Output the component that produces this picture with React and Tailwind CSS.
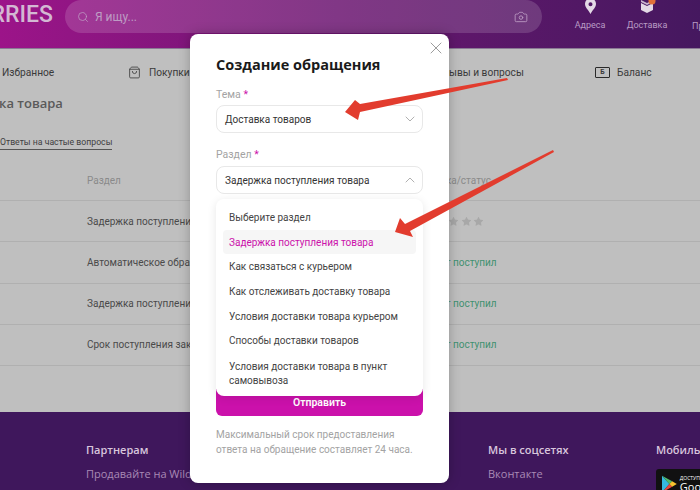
import React from 'react';
import { Search, Camera, ShoppingBag, X, ChevronDown, ChevronUp, Star } from 'lucide-react';

const rows = [
    ['Задержка поступления товара', null],
    ['Автоматическое обращение', 'Ответ поступил'],
    ['Задержка поступления товара', 'Ответ поступил'],
    ['Срок поступления заказа', 'Ответ поступил'],
];

const options = [
    'Выберите раздел',
    'Задержка поступления товара',
    'Как связаться с курьером',
    'Как отслеживать доставку товара',
    'Условия доставки товара курьером',
    'Способы доставки товаров',
];

const Label = ({ children }) => (
    <div className="text-[10.5px] leading-[16px] text-[#a3a3a3]">
        {children} <span className="text-[#cb11ab]">*</span>
    </div>
);

const Header = () => (
    <header className="h-[49px] shrink-0 flex bg-gradient-to-r from-[#9c1489] via-[#6a1570] to-[#45185f] border-b border-[#8a7a94]">
        <div className="w-[65px] shrink-0 overflow-hidden flex justify-end text-[#d3b8d3] text-[23px] leading-[30px] font-medium">
            <span className="whitespace-nowrap mr-[12px]">RRIES</span>
        </div>
        <div className="w-[477px] h-[33px] shrink-0 rounded-[17px] bg-white/15 flex items-center pl-[12px] pr-[14px] text-[#bd9cc3]">
            <Search size={12} strokeWidth={1.5} />
            <span className="ml-[6px] text-[12px] flex-1">Я ищу...</span>
            <Camera size={14} strokeWidth={1.5} />
        </div>
        <div className="flex-1 flex text-[9px] text-[#b99bc4]">
            <div className="ml-[30px] flex flex-col items-center w-[36px]">
                <svg width="11" height="14" viewBox="0 0 12 15">
                    <path fillRule="evenodd" d="M6 15 C3 10 0 8 0 4 A6 6 0 0 1 12 4 C12 8 9 10 6 15 Z M6 2.2 A2.2 2.2 0 1 0 6 6.6 A2.2 2.2 0 1 0 6 2.2 Z" fill="#e4d9e6" />
                </svg>
                <span className="mt-[5px]">Адреса</span>
            </div>
            <div className="ml-[19px] flex flex-col items-center w-[40px]">
                <svg width="20" height="14" viewBox="0 0 20 14">
                    <path d="M4 3 L10 6 L16 3 L16 10 L10 13 L4 10 Z" fill="#e4d9e6" />
                    <path d="M4 0 L10 3 L16 0 L16 2 L10 5 L4 2 Z" fill="#c9b4cf" />
                    <circle cx="15" cy="1" r="3.5" fill="#e0703a" />
                </svg>
                <span className="mt-[5px]">Доставка</span>
            </div>
            <span className="ml-[25px] mt-[20px] whitespace-nowrap">Про</span>
        </div>
    </header>
);

const NavBar = () => (
    <nav className="h-[45px] shrink-0 relative text-[10.2px] text-[#3a3a3a]">
        <span className="absolute left-[2px] top-[16px]">Избранное</span>
        <span className="absolute left-[128px] top-[16px] flex items-center gap-[8px]">
            <ShoppingBag size={13} strokeWidth={1.5} />Покупки
        </span>
        <span className="absolute left-[449px] top-[16px]">ывы и вопросы</span>
        <span className="absolute left-[595px] top-[16px] flex items-center gap-[7px]">
            <span className="w-[15px] h-[11px] border border-[#2a2a2a] rounded-[1px] flex items-center justify-center text-[7px] font-bold leading-none">Б</span>
            Баланс
        </span>
    </nav>
);

const Table = () => (
    <main className="flex-1 flex flex-col">
        <h2 className="text-[13px] leading-[18px] font-semibold text-[#5a5a5a] whitespace-nowrap -ml-[1px] font-['Open_Sans',sans-serif]">ка товара</h2>
        <div className="mt-[23px] h-[17px] text-[8.7px] leading-[14px] text-[#3f3f3f]">
            <span className="inline-block border-b border-[#555]">Ответы на частые вопросы</span>
        </div>
        <div className="mt-[8px] h-[41px] flex items-center border-b border-[#b0b0b0] text-[10px] text-[#8a8a8a]">
            <span className="ml-[87px] w-[335px] shrink-0">Раздел</span>
            <span className="whitespace-nowrap">Оценка/статус</span>
        </div>
        {rows.map((row, i) => (
            <div key={i} className="h-[41.25px] flex items-center border-b border-[#b0b0b0] text-[10px] text-[#4a4a4a] whitespace-nowrap">
                <span className="ml-[87px] w-[336px] shrink-0">{row[0]}</span>
                {row[1] ? (
                    <span className="text-[#3f9170]">{row[1]}</span>
                ) : (
                    <span className="flex gap-[1.5px] ml-[25px] text-[#a8a8a8]">
                        <Star size={11} fill="#a8a8a8" strokeWidth={0} />
                        <Star size={11} fill="#a8a8a8" strokeWidth={0} />
                        <Star size={11} fill="#a8a8a8" strokeWidth={0} />
                    </span>
                )}
            </div>
        ))}
    </main>
);

const Footer = () => (
    <footer className="h-[78px] shrink-0 relative bg-[#3f175c] text-[11px] font-['Open_Sans',sans-serif]">
        <div className="absolute left-[86px] top-[30px] font-semibold text-[#d8c6dc]">Партнерам</div>
        <div className="absolute left-[86px] top-[54px] text-[#a98ab5] whitespace-nowrap">Продавайте на Wildberries</div>
        <div className="absolute left-[488px] top-[30px] font-semibold text-[#d8c6dc]">Мы в соцсетях</div>
        <div className="absolute left-[488px] top-[54px] text-[#a98ab5]">Вконтакте</div>
        <div className="absolute left-[656px] top-[30px] font-semibold text-[#d8c6dc] whitespace-nowrap">Мобильные</div>
        <div className="absolute left-[656px] top-[57px] w-[60px] h-[30px] rounded-[3px] bg-[#111] flex items-center pl-[6px] gap-[3px] text-white">
            <svg width="16" height="18" viewBox="0 0 16 18">
                <path d="M0 0 L8 9 L0 18 Z" fill="#35b8e0" />
                <path d="M0 0 L11 6 L8 9 Z" fill="#4fb96b" />
                <path d="M0 18 L11 12 L8 9 Z" fill="#e8483f" />
                <path d="M11 6 L16 9 L11 12 L8 9 Z" fill="#f7c32e" />
            </svg>
            <div className="leading-none">
                <div className="text-[5px]">ДОСТУПНО В</div>
                <div className="text-[11px]">Google</div>
            </div>
        </div>
    </footer>
);

const Modal = () => (
    <div className="absolute left-[190px] top-[34px] w-[259px] h-[449px] bg-white rounded-[8px] shadow-[0_0_12px_rgba(0,0,0,0.25)] px-[26px] pt-[20px]">
        <X size={20} strokeWidth={1} className="absolute right-[3px] top-[4px] text-[#888]" />
        <h1 className="text-[14.5px] leading-[22px] font-bold text-[#1a1a1a] whitespace-nowrap font-['Open_Sans',sans-serif]">Создание обращения</h1>
        <div className="mt-[11px]"><Label>Тема</Label></div>
        <div className="mt-[2px] h-[28px] border border-[#e8e8e8] rounded-[8px] flex items-center justify-between pl-[8px] pr-[4px] text-[10px] text-[#333]">
            Доставка товаров
            <ChevronDown size={16} strokeWidth={1} className="text-[#888]" />
        </div>
        <div className="mt-[14px]"><Label>Раздел</Label></div>
        <div className="mt-[3px] h-[28px] border border-[#e8e8e8] rounded-[8px] flex items-center justify-between pl-[8px] pr-[4px] text-[10px] text-[#333]">
            Задержка поступления товара
            <ChevronUp size={16} strokeWidth={1} className="text-[#888]" />
        </div>
        <div className="mt-[5px] relative z-10 bg-white rounded-[8px] shadow-[0_2px_10px_rgba(0,0,0,0.1)] px-[7px] pt-[6px] h-[197px]">
            {options.map((option, i) => (
                <div
                    key={i}
                    className={`h-[24.7px] flex items-center px-[6px] rounded-[4px] text-[10px] whitespace-nowrap ${i === 1 ? 'bg-[#f6f6f6] text-[#cb11ab]' : 'text-[#444]'}`}
                >
                    {option}
                </div>
            ))}
            <div className="px-[6px] pt-[7px] text-[10px] leading-[14px] text-[#444]">Условия доставки товара в пункт самовывоза</div>
        </div>
        <button className="block w-full h-[27px] -mt-[7px] pt-[1px] rounded-b-[6px] bg-[#cb11ab] text-white text-[10.5px] font-semibold">Отправить</button>
        <p className="mt-[11px] text-[10px] leading-[15px] text-[#a3a3a3]">Максимальный срок предоставления ответа на обращение составляет 24 часа.</p>
    </div>
);

// red callout arrows drawn over the screenshot
const Arrows = () => (
    <svg className="absolute left-0 top-0 z-20" width="700" height="490" viewBox="0 0 700 490">
        <path d="M507 78 L360 104 L355 100 L345 112 L358 120 L360 112 L508 80 Z" fill="#e23c2e" />
        <path d="M553 150 L405 224 L400 218 L395 232 L413 237 L410 231 L554 152 Z" fill="#e23c2e" />
    </svg>
);

export default function App() {
    return (
        <div className="relative w-[700px] h-[490px] overflow-hidden flex flex-col bg-[#bfbfbf] font-['Roboto','Open_Sans',sans-serif]">
            <Header />
            <NavBar />
            <Table />
            <Footer />
            <Modal />
            <Arrows />
        </div>
    );
}
